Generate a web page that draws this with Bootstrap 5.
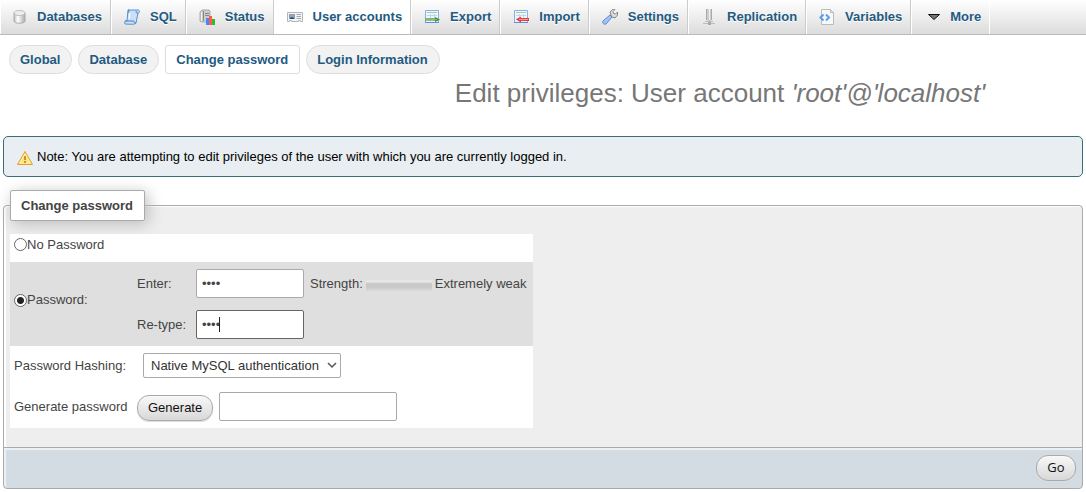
<!DOCTYPE html>
<html lang="en">
<head>
<meta charset="utf-8">
<meta name="viewport" content="width=device-width, initial-scale=1">
<title>User accounts - Change password</title>
<link rel="stylesheet" href="https://cdn.jsdelivr.net/npm/bootstrap@5.3.0/dist/css/bootstrap.min.css">
<style>
body{font-family:"Liberation Sans",Arial,sans-serif;font-size:13px;line-height:16px;color:#444;background:#fff}
a{color:#235a81;text-decoration:none}
.top-tabs{background:linear-gradient(#fff,#dcdcdc);height:35px;border-bottom:1px solid #bbb;overflow:hidden}
.top-tabs .nav-link{height:35px;padding:0 8px 2px 12px;gap:10px;color:#235a81;font-weight:bold;white-space:nowrap;text-shadow:0 1px 0 #fff;border-left:1px solid #fff;border-right:1px solid #ccc;border-radius:0}
.top-tabs .nav-item:first-child .nav-link{padding-left:10px}
.top-tabs .nav-link.active{background:#fff}
.top-tabs .nav-item:last-child .nav-link{border-right-color:#fff;gap:8px;padding-left:14px}
.top-tabs svg{width:16px;height:16px;flex:none}
.sub-tabs{padding:10px 9px 0;gap:6px}
.sub-tabs .nav-link{padding:6px 11px 6px 10px;height:29px;line-height:15px;font-weight:bold;color:#235a81;background:#f2f2f2;border:1px solid #ddd;border-radius:20px}
.sub-tabs .nav-link.active{background:#fff;border-radius:3px}
.page-title{font-size:26px;line-height:30px;font-weight:normal;color:#777;margin:4px 0 28px;padding-left:354px}
.notice{margin:0 3px 13px;padding:0 12px 0 13px;height:41px;color:#000;background:#e8eef1;border:1px solid #3a6c7e;border-radius:5px;gap:4px}
.notice svg{width:16px;height:16px;flex:none;margin-top:2px}
.pane{margin:0 3px;padding:13px 6px 19px;border:1px solid #aaa;border-radius:4px 4px 0 0;background:#eee;box-shadow:inset 2px 1px 1px #fff}
.pane legend{float:none;width:auto;margin:0;padding:7px 11px 6px 10px;font-size:13px;line-height:16px;font-weight:bold;background:#fff;border:1px solid #aaa;border-radius:2px;box-shadow:3px 3px 15px #bbb}
.options{width:523px;background:#fff}
.opt-row{padding:0 4px 2px;min-height:41px}
.opt-row.none-row{min-height:28px;padding-bottom:7px}
.opt-row.chosen{background:#dfdfdf;min-height:84px;padding-bottom:0}
.chosen .opt-label{padding-bottom:8px}
.opt-label{width:123px;flex:none}
input[type=radio]{appearance:none;width:13px;height:13px;margin:0;border:1px solid #666;border-radius:50%;background:#fff;flex:none}
input[type=radio]:checked{background:radial-gradient(circle,#222 3px,#fff 4px)}
.key-grid{row-gap:12px}
.key-label{width:59px;flex:none}
.text-field{height:29px;padding:5px;border:1px solid #aaa;border-radius:2px;background:#fff;color:#444;outline:0}
.key-field{width:108px;font-size:13px}
.key-field.current{border-color:#666}
.caret-line{position:absolute;left:23px;top:7px;width:1px;height:15px;background:#222}
.strength-label{margin-left:6px}
.strength{width:66px;height:12px;margin:2px 3px 0;background:linear-gradient(#dadada,#eaeaea 20%,#c8c8c8 40%,#c8c8c8 65%,#dadada)}
.plugin{position:relative;margin-left:6px}
.plugin select{appearance:none;width:198px;height:25px;padding:0 7px;border:1px solid #aaa;border-radius:2px;background:#fff;color:#333}
.plugin svg{position:absolute;right:4px;top:8px;width:10px;height:8px;pointer-events:none}
.push{height:26px;padding:0 10px;border:1px solid #aaa;border-radius:12px;color:#111;background:linear-gradient(#f8f8f8,#d8d8d8);box-shadow:0 1px 1px #ddd}
.push.make{width:76px;margin-top:2px}
.push.go{width:40px;line-height:20px;padding-bottom:2px;font-family:"Open Sans",sans-serif}
.made{width:178px;margin-left:6px}
.foot{margin:-1px 3px 3px;padding:0 6px;height:42px;background:#d3dce3;border:1px solid #aaa;border-radius:0 0 4px 4px;box-shadow:inset 2px 2px 1px #edf1f4}
</style>
</head>
<body>
<svg class="position-absolute" width="0" height="0" aria-hidden="true">
 <defs>
  <linearGradient id="metal"><stop stop-color="#bbb"/><stop offset=".35" stop-color="#fff"/><stop offset="1" stop-color="#aaa"/></linearGradient>
  <g id="sheet"><path d="M1.500 1.500h13v12h-13z" fill="#eef5ff" stroke="#8aaee6"/><path d="M3 3.500h10" stroke="#9ad691"/><path d="M3 6.500h10M3 9.500h10M6.500 5v7M10.500 5v7" stroke="#c3d4ef" fill="none"/><path d="M1 13.500h14" stroke="#5f8fd8"/></g>
 </defs>
</svg>
<nav class="top-tabs">
 <ul class="nav flex-nowrap">
  <li class="nav-item"><a class="nav-link d-flex align-items-center" href="#"><svg viewBox="0 0 16 16"><path d="M3 4v8c0 3 11 3 11 0V4" fill="url(#metal)" stroke="#aaa"/><ellipse cx="8.500" cy="4" rx="5.500" ry="2.500" fill="#eee" stroke="#bbb"/></svg>Databases</a></li>
  <li class="nav-item"><a class="nav-link d-flex align-items-center" href="#"><svg viewBox="0 0 16 16"><path d="M4 1h10c2 0 2 3 0 3l-2 10c0 2-10 1-11 1-1-2 0-3 1-3h1z" fill="#c9e0fa" stroke="#5a8fc9"/><path d="M4 1c2 0 1 2 0 3m8-2c0 2 1 2 2 2M1 12h8c2 0 1 3 3 2" fill="none" stroke="#4d7fbb"/><path d="M6 4l-1 6" stroke="#fff"/></svg>SQL</a></li>
  <li class="nav-item"><a class="nav-link d-flex align-items-center" href="#"><svg viewBox="0 0 16 16"><path d="M3 1h7l1 1v11H3L1 12V3z" fill="#ccc" stroke="#aaa"/><path d="M4.500 2v10M6 4.500h4M6 6.500h4" stroke="#888"/><path d="M2.500 3v9" stroke="#eee"/><path d="M8.500 9v7" stroke="#4389ff" stroke-width="3"/><path d="M11.500 7v9" stroke="#ff5b42" stroke-width="3"/><path d="M14.500 10v6" stroke="#37b837" stroke-width="3"/></svg>Status</a></li>
  <li class="nav-item"><a class="nav-link active d-flex align-items-center" href="#" aria-current="page"><svg viewBox="0 0 16 16"><path d="M.5 3.500h15v9h-2v-1h-2v1h-7v-1h-2v1h-2z" fill="#f4f4f4" stroke="#b5b5b5"/><path d="M2 5h6v5H2z" fill="#6ba6e6"/><circle cx="5" cy="6.500" r="1.500" fill="#d89a60"/><path d="M3 10c0-2.500 4-2.500 4 0" fill="#345"/><path d="M9.500 5.500H14M9.500 7.500H14M9.500 9.500H14" stroke="#a1a9b3"/></svg>User accounts</a></li>
  <li class="nav-item"><a class="nav-link d-flex align-items-center" href="#"><svg viewBox="0 0 16 16"><use href="#sheet"/><path d="M1 9.500h10V8l5 2.500-5 2.500v-1.500H1z" fill="#3f8a38"/><path d="M1 10.500h12" stroke="#7cc26c"/></svg>Export</a></li>
  <li class="nav-item"><a class="nav-link d-flex align-items-center" href="#"><svg viewBox="0 0 16 16"><use href="#sheet"/><path d="M16 9H8V7.500l-5 3 5 3V12h8z" fill="#e8383c"/><path d="M15 10.500H6" stroke="#ff9c96"/></svg>Import</a></li>
  <li class="nav-item"><a class="nav-link d-flex align-items-center" href="#"><svg viewBox="0 0 16 16"><path d="M9 6L8 3l3-3 2 .5-2 2 .5 2 2 .5 2-2v3L13 9l-3-1z" fill="#ddd" stroke="#888"/><path d="M8 6l2 2-6 7c-2 1-4-1-3-3z" fill="#9ec3f5" stroke="#5d8bcb"/></svg>Settings</a></li>
  <li class="nav-item"><a class="nav-link d-flex align-items-center" href="#"><svg viewBox="0 0 16 16"><path d="M5 0v11l3 1V0zM9 0v12l2-1V0z" fill="#ccc"/><path d="M5.500 0v11M10.500 0v11" stroke="#aaa"/><path d="M8.500 11v3M2 14.500h12M4 12.500h8" stroke="#bbb"/><path d="M7 13h3v3H7z" fill="#aaa"/></svg>Replication</a></li>
  <li class="nav-item"><a class="nav-link d-flex align-items-center" href="#"><svg viewBox="0 0 16 16"><path d="M2.500.5h9l3 3v12h-12z" fill="#f8f8f8" stroke="#bbb"/><path d="M11.500.5v3h3" fill="#ddd" stroke="#bbb"/><path d="M4.500 5.500L1.500 8.500l3 3M7 5.500l3 3-3 3" fill="none" stroke="#589ee8" stroke-width="2"/></svg>Variables</a></li>
  <li class="nav-item"><a class="nav-link d-flex align-items-center" href="#"><svg viewBox="0 0 16 16"><path d="M2.500 5.500h11L8 10.500z" fill="#777" stroke="#111"/></svg>More</a></li>
 </ul>
</nav>
<nav><ul class="nav sub-tabs">
 <li><a class="nav-link" href="#">Global</a></li>
 <li><a class="nav-link" href="#">Database</a></li>
 <li><a class="nav-link active" href="#" aria-current="page">Change password</a></li>
 <li><a class="nav-link" href="#">Login Information</a></li>
</ul></nav>
<main>
 <h2 class="page-title text-center">Edit privileges: User account <i>'root'@'localhost'</i></h2>
 <div class="notice d-flex align-items-center" role="alert"><svg viewBox="0 0 16 16"><path d="M8 1.500L15.500 14.500H.5z" fill="#ffe277" stroke="#e5a02c" stroke-linejoin="round"/><path d="M8 4L13 13H3z" fill="none" stroke="#fff3b8"/><path d="M8 6v4M8 11v2" stroke="#c8922e" stroke-width="2"/></svg><span>Note: You are attempting to edit privileges of the user with which you are currently logged in.</span></div>
 <form onsubmit="return false">
  <fieldset class="pane">
   <legend>Change password</legend>
   <div class="options">
    <div class="opt-row none-row d-flex align-items-center"><input type="radio" name="mode" id="none"><label for="none">No Password</label></div>
    <div class="opt-row chosen d-flex align-items-center">
     <div class="opt-label d-flex align-items-center"><input type="radio" name="mode" id="set" checked><label for="set">Password:</label></div>
     <div class="d-grid key-grid">
      <div class="d-flex align-items-center"><label class="key-label" for="pw">Enter:</label><input class="text-field key-field" type="password" id="pw" value="root"><span class="strength-label text-nowrap">Strength:</span><span class="strength" role="meter" aria-label="Strength"></span><span class="text-nowrap">Extremely weak</span></div>
      <div class="d-flex align-items-center"><label class="key-label" for="pw2">Re-type:</label><span class="position-relative d-flex"><input class="text-field key-field current" type="password" id="pw2" value="root"><span class="caret-line"></span></span></div>
     </div>
    </div>
    <div class="opt-row d-flex align-items-center"><label class="opt-label" for="plugin">Password Hashing:</label><div class="plugin d-flex"><select id="plugin"><option>Native MySQL authentication</option></select><svg viewBox="0 0 10 8"><path d="M1 2l4 4 4-4" fill="none" stroke="#555" stroke-width="1.500"/></svg></div></div>
    <div class="opt-row d-flex align-items-center"><label class="opt-label" for="made">Generate password</label><button type="button" class="push make">Generate</button><input class="text-field made" type="text" id="made"></div>
   </div>
  </fieldset>
  <div class="foot d-flex align-items-center justify-content-end"><button type="submit" class="push go">Go</button></div>
 </form>
</main>
<script src="https://cdn.jsdelivr.net/npm/bootstrap@5.3.0/dist/js/bootstrap.bundle.min.js"></script>
</body>
</html>
